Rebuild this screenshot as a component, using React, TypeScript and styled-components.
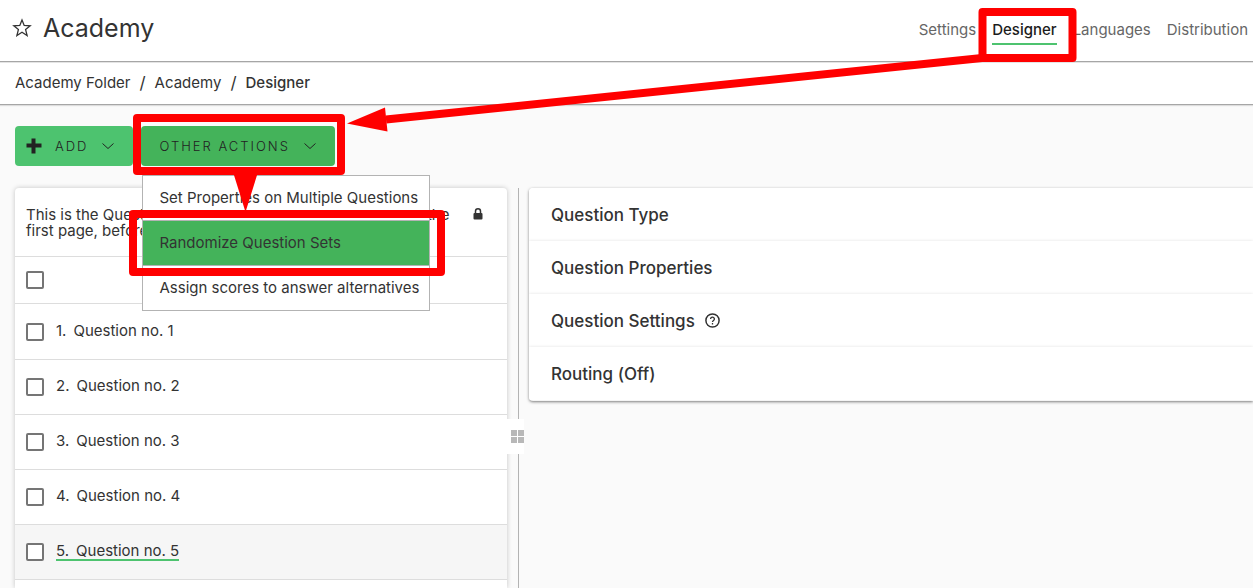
import React from "react";
import styled, { createGlobalStyle } from "styled-components";

const GlobalStyle = createGlobalStyle`
  *, *::before, *::after { box-sizing: border-box; }
  body {
    margin: 0;
    background: #fafafa;
    color: #333;
    font-family: Inter, "Liberation Sans", sans-serif;
    font-size: 15px;
    line-height: 16px;
  }
  button, input { font: inherit; color: inherit; margin: 0; }
  a { color: inherit; text-decoration: none; }
  h1, p, ul, ol { margin: 0; padding: 0; list-style: none; font-weight: 400; }
`;

const Page = styled.div`
  position: relative;
  display: flex;
  flex-direction: column;
  height: 100vh;
  overflow: hidden;
`;

const Header = styled.header`
  display: flex;
  justify-content: space-between;
  align-items: flex-start;
  height: 62px;
  padding: 12px 5px 0 12px;
  background: #fff;
  border-bottom: 1px solid #a6a6a6;
`;

const Title = styled.h1`
  display: flex;
  align-items: center;
  gap: 11px;
  font-size: 25px;
  line-height: 32px;
`;

const MainNav = styled.nav`
  display: flex;
  gap: 16px;
  padding-top: 10px;
`;

const NavLink = styled.a<{ $active?: boolean }>`
  height: 23px;
  color: ${(p) => (p.$active ? "#1c1c1c" : "#666")};
  font-weight: ${(p) => (p.$active ? 500 : 400)};
  border-bottom: 2px solid ${(p) => (p.$active ? "#4dc36f" : "transparent")};
`;

const Crumbs = styled.nav`
  display: flex;
  align-items: center;
  gap: 9px;
  height: 43px;
  padding: 0 15px 2px;
  background: #fff;
  border-top: 1px solid #e4e4e4;
  border-bottom: 1px solid #a6a6a6;
  box-shadow: 0 1px 1px #ddd;
`;

const Slash = styled.span`
  font-size: 17px;
`;

const Current = styled.span`
  font-weight: 500;
`;

const Toolbar = styled.div`
  display: flex;
  gap: 8px;
  padding: 21px 15px 22px;
`;

const MenuAnchor = styled.div`
  position: relative;
  display: flex;
`;

const ActionButton = styled.button<{ $open?: boolean }>`
  display: flex;
  align-items: center;
  height: 40px;
  padding: 0 18px 0 ${(p) => (p.$open ? 18 : 11)}px;
  gap: 13px;
  border: 0;
  border-radius: 4px;
  background: ${(p) => (p.$open ? "#44b35a" : "#4dc36f")};
  color: #222;
  font-size: 13px;
  font-weight: 300;
  letter-spacing: 2px;
`;

const Menu = styled.ul`
  position: absolute;
  top: 49px;
  left: 1px;
  z-index: 2;
  width: 288px;
  background: #fff;
  border: 1px solid #b3b3b3;
`;

const MenuItem = styled.button<{ $active?: boolean }>`
  display: block;
  width: 100%;
  height: ${(p) => (p.$active ? 46 : 44)}px;
  padding: 0 8px 0 16px;
  border: 0 solid #b3b3b3;
  border-width: ${(p) => (p.$active ? "1px 0" : "0")};
  background: ${(p) => (p.$active ? "#44b35a" : "#fff")};
  text-align: left;
  white-space: nowrap;
`;

const Workspace = styled.main`
  display: flex;
  flex: 1;
  align-items: stretch;
  min-height: 0;
`;

const QuestionPanel = styled.section`
  width: 492px;
  flex: none;
  margin-left: 15px;
  background: #fff;
  border-radius: 4px 4px 0 0;
  box-shadow: 0 0 5px rgba(0, 0, 0, 0.22);
`;

const Intro = styled.div`
  display: flex;
  justify-content: space-between;
  align-items: flex-start;
  height: 69px;
  padding: 19px 24px 0 11px;
  border-bottom: 1px solid #ddd;

  svg { margin-top: 1px; }
`;

const IntroText = styled.p`
  width: 434px;
`;

const Row = styled.li<{ $height?: number; $selected?: boolean }>`
  display: flex;
  align-items: center;
  gap: 12px;
  height: ${(p) => p.$height ?? 55}px;
  padding: 0 11px;
  border-bottom: 1px solid #ddd;
  background: ${(p) => (p.$selected ? "#f6f6f6" : "#fff")};
`;

const Check = styled.input`
  appearance: none;
  width: 18px;
  height: 18px;
  border: 2px solid #757575;
  border-radius: 2px;
  background: #fff;
`;

const QuestionLink = styled.a<{ $selected?: boolean }>`
  display: flex;
  gap: 7px;
  height: 18px;
  border-bottom: 2px solid ${(p) => (p.$selected ? "#4dc36f" : "transparent")};
`;

const Splitter = styled.div`
  position: relative;
  flex: none;
  width: 22px;
  background: linear-gradient(#b3b3b3, #b3b3b3) 11px 0 / 1px 100% no-repeat;
`;

const Handle = styled.button`
  position: absolute;
  top: 231px;
  left: 0;
  display: flex;
  align-items: center;
  justify-content: flex-end;
  width: 17px;
  height: 35px;
  padding: 0;
  border: 0;
  background: #fff;
`;

const DetailPanel = styled.section`
  flex: 1;
  align-self: flex-start;
  padding-bottom: 1px;
  background: #fff;
  border-radius: 4px 0 0 4px;
  box-shadow: 0 1px 3px rgba(0, 0, 0, 0.5);
  overflow: hidden;
`;

const DetailHeading = styled.button`
  display: flex;
  align-items: center;
  gap: 10px;
  width: 100%;
  height: 53px;
  padding: 0 22px;
  border: 0;
  background: #fff;
  font-size: 17px;
  font-weight: 500;

  & + & { box-shadow: 0 0 3px rgba(0, 0, 0, 0.12); }
`;

const Annotations = styled.svg`
  position: absolute;
  top: 0;
  left: 0;
  z-index: 3;
  pointer-events: none;
`;

const Chevron = () => (
  <svg width="14" height="8" viewBox="0 0 14 8" fill="none" stroke="#222" strokeWidth="1">
    <path d="M1.5 1.5 7 6.5l5.5-5" />
  </svg>
);

const questions = [1, 2, 3, 4, 5];

export default function App() {
  return (
    <Page>
      <GlobalStyle />
      <Header>
        <Title>
          <svg width="20" height="20" viewBox="0 0 20 20" fill="none" stroke="#333" strokeWidth="1.3" strokeLinejoin="miter">
            <path d="m10 1.9 2.2 5.5 6 .4-4.6 3.8 1.5 5.9L10 14.3l-5.1 3.2 1.5-5.9L1.8 7.8l6-.4z" />
          </svg>
          Academy
        </Title>
        <MainNav aria-label="Survey">
          <NavLink href="#settings">Settings</NavLink>
          <NavLink href="#designer" $active aria-current="page">Designer</NavLink>
          <NavLink href="#languages">Languages</NavLink>
          <NavLink href="#distribution">Distribution</NavLink>
        </MainNav>
      </Header>
      <Crumbs aria-label="Breadcrumb">
        <a href="#folder">Academy Folder</a>
        <Slash>/</Slash>
        <a href="#academy">Academy</a>
        <Slash>/</Slash>
        <Current>Designer</Current>
      </Crumbs>
      <Toolbar>
        <ActionButton>
          <svg width="16" height="16" viewBox="0 0 16 16" fill="#222">
            <path d="M5.5 0.5h4v5h6v4h-6v6h-4v-6h-5v-4h5z" />
          </svg>
          ADD
          <Chevron />
        </ActionButton>
        <MenuAnchor>
          <ActionButton $open aria-haspopup="menu" aria-expanded="true">
            OTHER ACTIONS
            <Chevron />
          </ActionButton>
          <Menu>
            <li><MenuItem>Set Properties on Multiple Questions</MenuItem></li>
            <li><MenuItem $active>Randomize Question Sets</MenuItem></li>
            <li><MenuItem>Assign scores to answer alternatives</MenuItem></li>
          </Menu>
        </MenuAnchor>
      </Toolbar>
      <Workspace>
        <QuestionPanel>
          <Intro>
            <IntroText>
              This is the Question Set for contents displayed there, on the
              first page, before
            </IntroText>
            <svg width="10" height="12" viewBox="0 0 10 12" role="img" aria-label="Locked">
              <path d="M2.5 5.5V3.3a2.5 2.5 0 0 1 5 0v2.2" fill="none" stroke="#333" strokeWidth="1.5" />
              <rect x="0.5" y="5" width="9" height="6.5" rx="1" fill="#333" />
            </svg>
          </Intro>
          <ul>
            <Row $height={47}>
              <Check type="checkbox" aria-label="Select all questions" />
            </Row>
            {questions.map((n) => (
              <Row key={n} $height={n === 1 ? 56 : 55} $selected={n === 5}>
                <Check type="checkbox" aria-label={`Select question ${n}`} />
                <QuestionLink href={`#q${n}`} $selected={n === 5}>
                  <span>{n}.</span>
                  <span>Question no. {n}</span>
                </QuestionLink>
              </Row>
            ))}
          </ul>
        </QuestionPanel>
        <Splitter>
          <Handle aria-label="Resize panels">
            <svg width="13" height="13" viewBox="0 0 13 13" fill="#b8b8b8">
              <path d="M0 0h6v6H0zM7 0h6v6H7zM0 7h6v6H0zM7 7h6v6H7z" />
            </svg>
          </Handle>
        </Splitter>
        <DetailPanel>
          <DetailHeading>Question Type</DetailHeading>
          <DetailHeading>Question Properties</DetailHeading>
          <DetailHeading>
            Question Settings
            <svg width="15" height="15" viewBox="0 0 15 15" fill="none" stroke="#333">
              <circle cx="7.5" cy="7.5" r="6.6" strokeWidth="1.5" />
              <path d="M5.6 6.1c0-2.5 3.8-2.5 3.8-.1 0 1.4-1.9 1.4-1.9 3M7.5 10v1.4" strokeWidth="1.3" />
            </svg>
          </DetailHeading>
          <DetailHeading>Routing (Off)</DetailHeading>
        </DetailPanel>
      </Workspace>
      <Annotations width="1253" height="588" viewBox="0 0 1253 588" fill="none" aria-hidden="true">
        <g stroke="#f00" strokeWidth="8" strokeLinejoin="round">
          <rect x="982.5" y="12" width="90" height="46" />
          <rect x="137" y="118" width="204" height="53" />
          <rect x="133" y="214" width="308" height="58" />
          <path d="M982 58 386 119.5" />
        </g>
        <path d="M347 123.5 385 107.5 387.5 131.5zM233 172h25l-12.5 40z" fill="#f00" />
      </Annotations>
    </Page>
  );
}
